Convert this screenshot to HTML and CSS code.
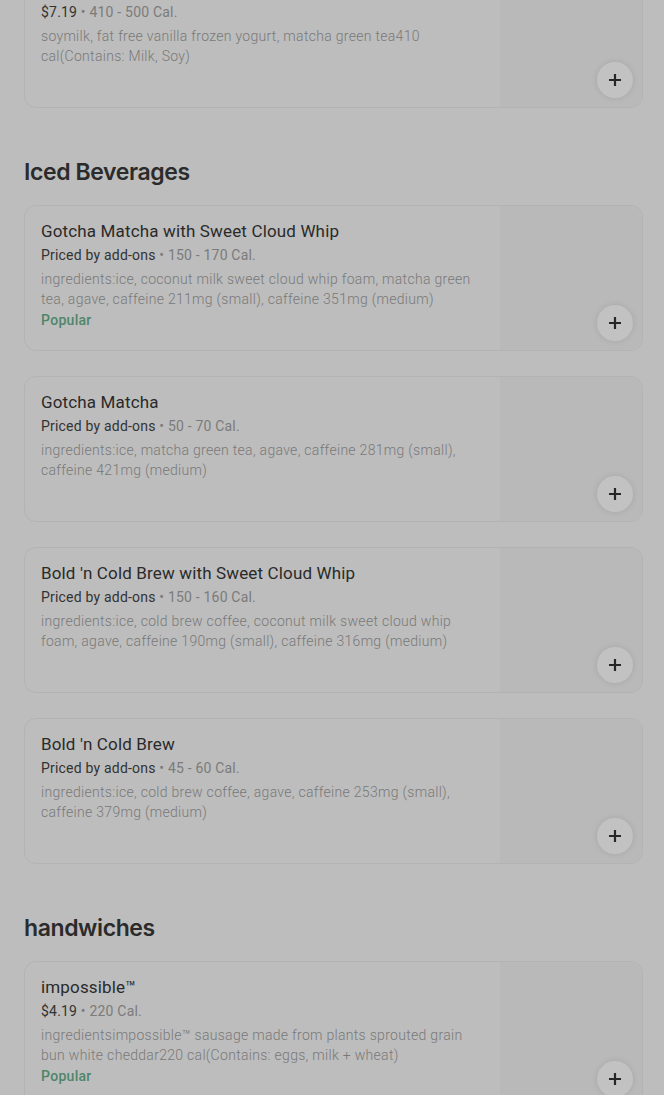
FILE: index.html
```html
<!DOCTYPE html>
<html lang="en">
<head>
    <meta charset="UTF-8">
    <meta name="viewport" content="width=device-width, initial-scale=1.0">
    <title>Menu</title>
    <link rel="stylesheet" href="styles.css">
</head>
<body>

    <main class="menu">

        <!-- Previous section (scrolled past) -->
        <section class="menu-section first">
            <div class="item">
                <div class="item-info">
                    <h3 class="item-name">Matcha Crème Frappé</h3>
                    <p class="item-meta"><span class="price">$7.19</span> • 410 - 500 Cal.</p>
                    <p class="item-desc">soymilk, fat free vanilla frozen yogurt, matcha green tea410 cal(Contains: Milk, Soy)</p>
                </div>
                <div class="item-image">
                    <button class="add-btn"><svg viewBox="0 0 12 12"><path d="M6 0v12M0 6h12"/></svg></button>
                </div>
            </div>
        </section>

        <!-- Iced Beverages -->
        <section class="menu-section">
            <h2 class="section-title">Iced Beverages</h2>

            <div class="item">
                <div class="item-info">
                    <h3 class="item-name">Gotcha Matcha with Sweet Cloud Whip</h3>
                    <p class="item-meta"><span class="price">Priced by add-ons</span> • 150 - 170 Cal.</p>
                    <p class="item-desc">ingredients:ice, coconut milk sweet cloud whip foam, matcha green tea, agave, caffeine 211mg (small), caffeine 351mg (medium)</p>
                    <p class="item-tag">Popular</p>
                </div>
                <div class="item-image">
                    <button class="add-btn"><svg viewBox="0 0 12 12"><path d="M6 0v12M0 6h12"/></svg></button>
                </div>
            </div>

            <div class="item">
                <div class="item-info">
                    <h3 class="item-name">Gotcha Matcha</h3>
                    <p class="item-meta"><span class="price">Priced by add-ons</span> • 50 - 70 Cal.</p>
                    <p class="item-desc">ingredients:ice, matcha green tea, agave, caffeine 281mg (small), caffeine 421mg (medium)</p>
                </div>
                <div class="item-image">
                    <button class="add-btn"><svg viewBox="0 0 12 12"><path d="M6 0v12M0 6h12"/></svg></button>
                </div>
            </div>

            <div class="item">
                <div class="item-info">
                    <h3 class="item-name">Bold 'n Cold Brew with Sweet Cloud Whip</h3>
                    <p class="item-meta"><span class="price">Priced by add-ons</span> • 150 - 160 Cal.</p>
                    <p class="item-desc">ingredients:ice, cold brew coffee, coconut milk sweet cloud whip foam, agave, caffeine 190mg (small), caffeine 316mg (medium)</p>
                </div>
                <div class="item-image">
                    <button class="add-btn"><svg viewBox="0 0 12 12"><path d="M6 0v12M0 6h12"/></svg></button>
                </div>
            </div>

            <div class="item">
                <div class="item-info">
                    <h3 class="item-name">Bold 'n Cold Brew</h3>
                    <p class="item-meta"><span class="price">Priced by add-ons</span> • 45 - 60 Cal.</p>
                    <p class="item-desc">ingredients:ice, cold brew coffee, agave, caffeine 253mg (small), caffeine 379mg (medium)</p>
                </div>
                <div class="item-image">
                    <button class="add-btn"><svg viewBox="0 0 12 12"><path d="M6 0v12M0 6h12"/></svg></button>
                </div>
            </div>
        </section>

        <!-- Handwiches -->
        <section class="menu-section">
            <h2 class="section-title">handwiches</h2>

            <div class="item">
                <div class="item-info">
                    <h3 class="item-name">impossible™</h3>
                    <p class="item-meta"><span class="price">$4.19</span> • 220 Cal.</p>
                    <p class="item-desc">ingredientsimpossible™ sausage made from plants sprouted grain bun white cheddar220 cal(Contains: eggs, milk + wheat)</p>
                    <p class="item-tag">Popular</p>
                </div>
                <div class="item-image">
                    <button class="add-btn"><svg viewBox="0 0 12 12"><path d="M6 0v12M0 6h12"/></svg></button>
                </div>
            </div>
        </section>

    </main>

</body>
</html>
```

FILE: styles.css
```css
body {
    font-family: Roboto, "Liberation Sans", sans-serif;
    margin: 0;
    padding: 0;
    background-color: #bdbdbd;
    overflow: hidden;
}

/* Menu */
.menu {
    padding: 0 21px 0 24px;
}

.menu-section.first {
    margin-top: -38px;
}

.section-title {
    font-family: Inter, Roboto, sans-serif;
    font-size: 23px;
    font-weight: 600;
    letter-spacing: -0.4px;
    line-height: 32px;
    color: #2b2b2b;
    margin: 48px 0 17px;
}

/* Item card */
.item {
    display: flex;
    height: 146px;
    box-sizing: border-box;
    border: 1px solid #b3b3b3;
    border-radius: 12px;
    margin-bottom: 25px;
    overflow: hidden;
}

.item-info {
    flex: 1;
    padding: 13px 20px 0 16px;
}

.item-name {
    font-size: 17px;
    font-weight: 400;
    letter-spacing: 0.15px;
    line-height: 24px;
    color: #2a2a2a;
    margin: 0;
}

.item-meta {
    font-size: 14px;
    letter-spacing: 0.2px;
    line-height: 20px;
    color: #7b7b7b;
    margin: 2px 0 4px;
}

.item-meta .price {
    color: #333;
}

.item-desc {
    font-size: 14px;
    font-weight: 300;
    letter-spacing: 0.3px;
    line-height: 20px;
    color: #797979;
    margin: 0;
}

.item-tag {
    font-size: 14px;
    font-weight: 500;
    letter-spacing: 0.3px;
    line-height: 22px;
    color: #4f8669;
    margin: 0;
}

/* Image side */
.item-image {
    width: 142px;
    background: #b9b9b9;
    display: flex;
    align-items: flex-end;
    justify-content: flex-end;
    padding: 0 9px 9px 0;
    box-sizing: border-box;
}

.add-btn {
    width: 36px;
    height: 36px;
    border-radius: 50%;
    border: none;
    background: #c2c2c2;
    box-shadow: 0 0 6px rgba(0, 0, 0, 0.1);
    padding: 0;
    display: flex;
    align-items: center;
    justify-content: center;
    cursor: pointer;
}

.add-btn svg {
    width: 12px;
    height: 12px;
    stroke: #262626;
    stroke-width: 2.2;
    fill: none;
}
```
